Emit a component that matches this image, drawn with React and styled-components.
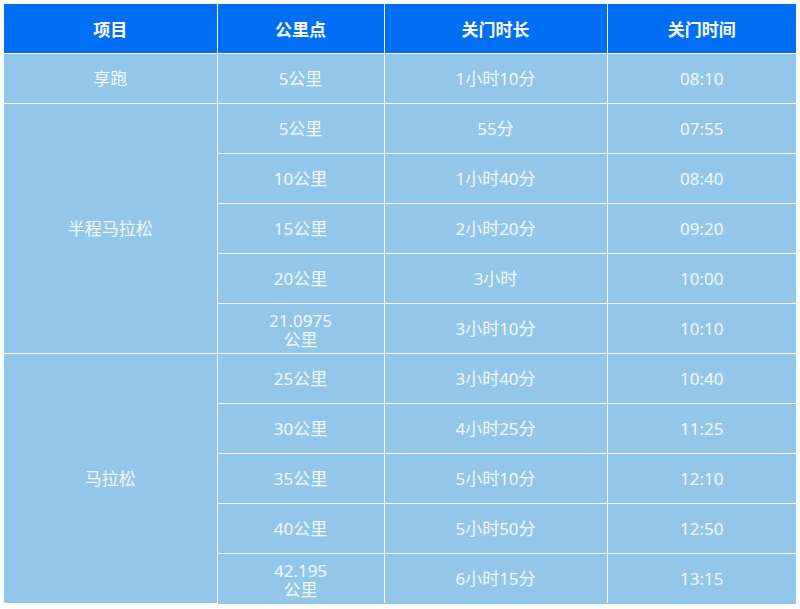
import styled, { createGlobalStyle } from "styled-components";

const GlobalStyle = createGlobalStyle`
    body {
        margin: 0;
        background: #ffffff;
        font-family: "Noto Sans", "Noto Sans CJK SC", sans-serif;
    }
`

const Wrapper = styled.div`
    padding: 4px;
`

const Table = styled.table`
    width: 792px;
    border-collapse: collapse;
    table-layout: fixed;
    background-color: #93c6eb;
`

const HeadCell = styled.th`
    height: 49px;
    background-color: #006ef5;
    color: #ffffff;
    font-size: 17px;
    font-weight: 700;
    border: 1px solid #ffffff;
    border-top: none;
    padding: 0;

    &:first-child{
        border-left: none;
    }

    &:last-child{
        border-right: none;
    }
`

const Cell = styled.td`
    height: 47px;
    color: #f4f9fd;
    font-size: 17px;
    line-height: 1.1;
    text-align: center;
    border: 1px solid #ffffff;
    padding: 2px 0 0;

    &:first-child{
        border-left: none;
    }

    &:last-child{
        border-right: none;
    }
`

const Line = styled.span`
    display: block;
    line-height: 19px;
`

const LastRow = styled.tr`
    td{
        border-bottom: none;
    }
`

const rows = [
    { group: "享跑", span: 1, items: [["5公里", "1小时10分", "08:10"]] },
    {
        group: "半程马拉松", span: 5, items: [
            ["5公里", "55分", "07:55"],
            ["10公里", "1小时40分", "08:40"],
            ["15公里", "2小时20分", "09:20"],
            ["20公里", "3小时", "10:00"],
            [["21.0975", "公里"], "3小时10分", "10:10"],
        ]
    },
    {
        group: "马拉松", span: 5, items: [
            ["25公里", "3小时40分", "10:40"],
            ["30公里", "4小时25分", "11:25"],
            ["35公里", "5小时10分", "12:10"],
            ["40公里", "5小时50分", "12:50"],
            [["42.195", "公里"], "6小时15分", "13:15"],
        ]
    },
]

const Distance = ({ value }) => {
    if (Array.isArray(value)) {
        return <>{value.map(v => <Line key={v}>{v}</Line>)}</>
    }
    return value
}

const App = () => {
    const body = []
    rows.forEach((g, gi) => {
        g.items.forEach((item, i) => {
            const isLast = gi === rows.length - 1 && i === g.items.length - 1
            const Row = isLast ? LastRow : "tr"
            body.push(
                <Row key={`${gi}-${i}`}>
                    {i === 0 && <Cell rowSpan={g.span}>{g.group}</Cell>}
                    <Cell><Distance value={item[0]} /></Cell>
                    <Cell>{item[1]}</Cell>
                    <Cell>{item[2]}</Cell>
                </Row>
            )
        })
    })

    return (
        <Wrapper>
            <GlobalStyle />
            <Table>
                <colgroup>
                    <col style={{ width: 213 }} />
                    <col style={{ width: 167 }} />
                    <col style={{ width: 223 }} />
                    <col style={{ width: 189 }} />
                </colgroup>
                <thead>
                    <tr>
                        <HeadCell>项目</HeadCell>
                        <HeadCell>公里点</HeadCell>
                        <HeadCell>关门时长</HeadCell>
                        <HeadCell>关门时间</HeadCell>
                    </tr>
                </thead>
                <tbody>{body}</tbody>
            </Table>
        </Wrapper>
    )
}

export default App
